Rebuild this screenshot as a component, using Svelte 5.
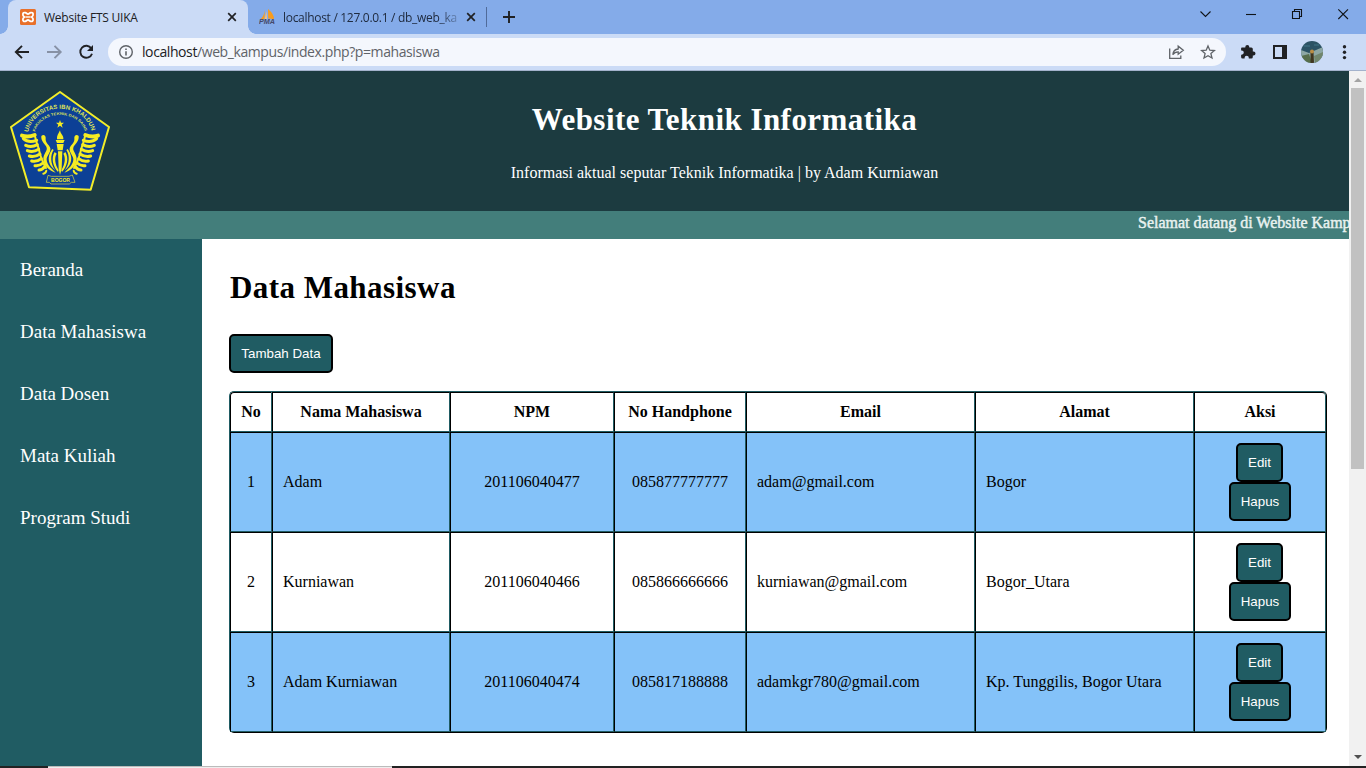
<script>
  const menu = ['Beranda', 'Data Mahasiswa', 'Data Dosen', 'Mata Kuliah', 'Program Studi'];
  const heads = ['No', 'Nama Mahasiswa', 'NPM', 'No Handphone', 'Email', 'Alamat', 'Aksi'];
  const rows = [
    ['1', 'Adam', '201106040477', '085877777777', 'adam@gmail.com', 'Bogor'],
    ['2', 'Kurniawan', '201106040466', '085866666666', 'kurniawan@gmail.com', 'Bogor_Utara'],
    ['3', 'Adam Kurniawan', '201106040474', '085817188888', 'adamkgr780@gmail.com', 'Kp. Tunggilis, Bogor Utara']
  ];
  const centered = [0, 2, 3];
</script>

{#snippet wing()}
  <g fill="none" stroke="#f5ec22" stroke-linecap="round">
    <path stroke-width="12" d="M66 167Q84 173 104 165" />
    <path stroke-width="9" d="M70 176Q86 190 110 181M77 196Q94 204 112 194M82 212Q99 219 116 208M88 228Q104 233 120 222M95 243Q110 247 124 236M105 257Q118 259 129 249M117 270Q127 270 134 260" />
    <path stroke-width="6" d="M130 281Q137 280 139 272M104 165Q109 188 116 205Q121 234 138 264" />
  </g>
  <path d="M124 168C130 161 138 166 137 174C135 190 148 193 151 205C153 218 139 229 140 239C141 256 156 266 167 278C146 272 130 255 130 237C130 221 143 212 140 203C137 192 122 186 124 168Z" />
  <path d="M157 207C144 224 141 246 158 264L166 271C150 250 151 225 161 210Z" />
  <path d="M164 216C153 234 158 258 174 276L176 271C164 250 163 233 170 221Z" />
{/snippet}

<div class="window">
  <div class="tabs">
    <div class="tab active">
      <svg class="fav" viewBox="0 0 16 16"><rect width="16" height="16" rx="1.5" fill="#e8702a" /><path d="M5.2 3.6C2.4 3 2.1 6.5 4.4 8C2.1 9.5 2.4 13 5.2 12.4C6.6 12.1 7 11 8 11S9.4 12.1 10.8 12.4C13.6 13 13.9 9.5 11.6 8C13.9 6.5 13.6 3 10.8 3.6C9.4 3.9 9 5 8 5S6.6 3.9 5.2 3.6Z" fill="none" stroke="#fff" stroke-width="1.8" /><path d="M5.6 8H10.4" stroke="#fff" stroke-width="1.4" /></svg>
      <span class="t1">Website FTS UIKA</span>
      <svg class="x" viewBox="0 0 10 10"><path d="M1.2 1.2L8.8 8.8M8.8 1.2L1.2 8.8" stroke="#202124" stroke-width="1.7" /></svg>
    </div>
    <div class="tab second">
      <svg class="fav" viewBox="0 0 16 16"><path d="M6 1L5.4 10L1 11Q5 7 6 1ZM9 0Q15 5 15 10L9.2 9.5Z" fill="#f89c1c" /><path d="M7.5 2L8 10L5.8 10Z" fill="#f9c27a" /><text x="0" y="15.3" textLength="16" lengthAdjust="spacingAndGlyphs" font-size="6.5" font-style="italic" font-weight="bold" font-family="Liberation Sans, sans-serif" fill="#45496a">PMA</text></svg>
      <span class="t2">localhost / 127.0.0.1 / db_web_ka</span>
      <svg class="x" viewBox="0 0 10 10"><path d="M1.2 1.2L8.8 8.8M8.8 1.2L1.2 8.8" stroke="#202124" stroke-width="1.7" /></svg>
    </div>
    <i class="sep"></i>
    <svg class="plus" viewBox="0 0 12 12"><path d="M6 0V12M0 6H12" stroke="#202124" stroke-width="1.9" /></svg>
    <svg class="controls" viewBox="0 0 160 20" fill="none" stroke="#101418" stroke-width="1.1"><path d="M6.5 7.5L11.5 12.5L16.5 7.5" /><path d="M52 10.5H62" /><path d="M98.5 7.5H105.5V14.5H98.5ZM100.5 7.5V5.5H107.5V12.5H105.5" /><path d="M144.3 5.3L154 15M154 5.3L144.3 15" /></svg>
  </div>

  <div class="toolbar">
    <svg class="nav" viewBox="0 0 108 36" fill="none" stroke-width="1.9">
      <path d="M29 18H16.5M22 11.8L15.8 18L22 24.2" stroke="#202124" />
      <path d="M47 18H60M54.5 11.8L60.7 18L54.5 24.2" stroke="#8791a5" />
      <path d="M91.3 14.4A6 6 0 1 0 92 19.7" stroke="#202124" /><path d="M93 11V17H87Z" fill="#202124" />
    </svg>
    <div class="address">
      <svg class="info" viewBox="0 0 16 16"><circle cx="8" cy="8" r="6.3" fill="none" stroke="#5f6368" stroke-width="1.4" /><path d="M8 7.2V11.4M8 4.4V6" stroke="#5f6368" stroke-width="1.6" /></svg>
      <span class="url"><b>localhost</b>/web_kampus/index.php?p=mahasiswa</span>
      <svg class="actions" viewBox="0 0 50 20" fill="none" stroke="#5f6368" stroke-width="1.3"><path d="M1.7 6.5V16.4H12.8V13.6" /><path d="M4.8 12.7C5.2 8.8 7.5 7.2 10.2 7V4.2L15.3 8.3L10.2 12.2V9.8C8 9.8 6.2 10.5 4.8 12.7Z" /><path d="M40 4L41.8 8.2L46.4 8.6L42.9 11.6L44 16L40 13.7L36 16L37.1 11.6L33.6 8.6L38.2 8.2Z" /></svg>
    </div>
    <svg class="ext" viewBox="0 0 140 36">
      <path d="M15.6 14H19V13.5A2 2 0 0 1 23 13.5V14H25A1.5 1.5 0 0 1 26.5 15.5V18H27.2A2 2 0 0 1 27.2 22H26.5V23.5A1.5 1.5 0 0 1 25 25H22.5V24.3A2 2 0 0 0 18.3 24.3V25H16.3A1.5 1.5 0 0 1 14.8 23.5V21.2H15.4A2 2 0 0 0 15.4 17H14.8V15A1 1 0 0 1 15.6 14Z" fill="#202124" transform="translate(0.3 -0.5)" />
      <path d="M47 11H61V25H47ZM49 13V23H56V13Z" fill="#202124" fill-rule="evenodd" />
      <clipPath id="av"><circle cx="86" cy="18" r="11" /></clipPath>
      <g clip-path="url(#av)"><path d="M75 7H97V29H75Z" fill="#2c5364" /><path d="M75 16L83 19L97 13V29H75Z" fill="#8da7a4" /><path d="M75 22L83 20L86 29H75Z" fill="#576e4b" /><path d="M88 22L97 18V29H89Z" fill="#71866d" /><path d="M84.5 18H87.5L88 29H84.5Z" fill="#40361f" /><circle cx="86" cy="17.5" r="2" fill="#b98d45" /><path d="M78 12H84M88 11H93" stroke="#417786" /></g>
      <g fill="#202124"><circle cx="118.5" cy="12.8" r="1.7" /><circle cx="118.5" cy="18.2" r="1.7" /><circle cx="118.5" cy="23.6" r="1.7" /></g>
    </svg>
  </div>

  <div class="viewport">
    <div class="page">
      <header>
        <svg class="logo" viewBox="30 33 300 300">
          <path d="M180 36L327 141L272 329L87 322L33 141Z" fill="#0c4096" stroke="#f3ed28" stroke-width="6" stroke-linejoin="round" />
          <path id="arc1" d="M84 157C105 63 255 63 276 157" fill="none" />
          <path id="arc2" d="M105 155C124 88 236 88 255 155" fill="none" />
          <g fill="#dfe357" font-family="Liberation Sans, sans-serif" font-weight="bold">
            <text font-size="18"><textPath href="#arc1" textLength="254" lengthAdjust="spacingAndGlyphs">UNIVERSITAS IBN KHALDUN</textPath></text>
            <text font-size="11"><textPath href="#arc2" textLength="193" lengthAdjust="spacingAndGlyphs">FAKULTAS TEKNIK DAN SAINS</textPath></text>
          </g>
          <g fill="#f5ec22">
            <path d="M180 120L183 128L192 128L185 134L188 143L180 137L172 143L175 134L168 128L177 128Z" />
            {@render wing()}
            <g transform="translate(360 0) scale(-1 1)">{@render wing()}</g>
            <path d="M180 151C175 162 170 167 171 178H190C192 166 181 163 180 151ZM167 180H194L190 189H171ZM170 192H191L188 211H173ZM174 214H187L185 266L180 285L176 266Z" />
          </g>
          <path d="M144 286L154 289H207L217 285L225 307H214L208 312H153L148 307H139Z" fill="#0c4096" stroke="#e8df35" stroke-width="2" />
          <text x="153" y="307" font-size="18" textLength="57" lengthAdjust="spacingAndGlyphs" font-family="Liberation Sans, sans-serif" font-weight="bold" fill="#f5ec22">BOGOR</text>
        </svg>
        <div class="heading">
          <h1>Website Teknik Informatika</h1>
          <p>Informasi aktual seputar Teknik Informatika | by Adam Kurniawan</p>
        </div>
      </header>
      <div class="marquee"><span>Selamat datang di Website Kampus</span></div>
      <div class="body">
        <nav>{#each menu as item}<a href="#menu">{item}</a>{/each}</nav>
        <main>
          <h2>Data Mahasiswa</h2>
          <button class="add">Tambah Data</button>
          <div class="table">
            {#each heads as h}<div class="cell head">{h}</div>{/each}
            {#each rows as row, r}
              {#each row as value, c}
                <div class="cell" class:blue={r % 2 === 0} class:mid={centered.includes(c)}>{value}</div>
              {/each}
              <div class="cell act" class:blue={r % 2 === 0}><button class="edit">Edit</button><button class="del">Hapus</button></div>
            {/each}
          </div>
        </main>
      </div>
    </div>
    <div class="scroll">
      <i class="up"></i>
      <div class="thumb"></div>
      <i class="down"></i>
    </div>
  </div>
  <div class="edge"><i></i></div>
</div>

<style>
  :global(body) { overflow: hidden; }
  .window { width: 1366px; height: 768px; display: flex; flex-direction: column; overflow: hidden; background: #fff; font-family: 'Liberation Serif', serif; box-sizing: border-box; }
  .window * { box-sizing: border-box; }
  svg { display: block; flex: none; }

  .tabs { height: 34px; flex: none; display: flex; align-items: center; background: #84abe9; font: 12px 'Open Sans', sans-serif; color: #202c40; }
  .tab { height: 34px; display: flex; align-items: center; white-space: nowrap; }
  .active { width: 240px; margin-left: 8px; padding: 0 11px 0 12px; background: #cbdbf6; border-radius: 8px 8px 0 0; position: relative; color: #202124; }
  .active::before, .active::after { content: ''; position: absolute; bottom: 0; width: 8px; height: 8px; }
  .active::before { left: -8px; background: radial-gradient(circle at 0 0, transparent 7.5px, #cbdbf6 8px); }
  .active::after { right: -8px; background: radial-gradient(circle at 100% 0, transparent 7.5px, #cbdbf6 8px); }
  .fav { width: 16px; height: 16px; margin-right: 8px; }
  .x { width: 10px; height: 10px; }
  .t1 { flex: 1; letter-spacing: -0.25px; }
  .second { width: 238px; padding: 0 10px 0 11px; }
  .t2 { width: 175px; margin-right: 8px; overflow: hidden; letter-spacing: -0.3px; mask-image: linear-gradient(90deg, #000 155px, transparent 182px); }
  .sep { width: 1px; height: 20px; background: #506b9a; }
  .plus { width: 12px; height: 12px; margin-left: 16px; }
  .controls { width: 160px; height: 20px; margin: -6px 12px 0 auto; }

  .toolbar { height: 37px; flex: none; display: flex; align-items: center; background: #cbdbf6; border-bottom: 1px solid #a3b2cc; }
  .nav { width: 108px; height: 36px; }
  .address { width: 1118px; height: 28px; border-radius: 14px; background: #f4f7fd; display: flex; align-items: center; padding: 0 8px 0 10px; }
  .info { width: 16px; height: 16px; margin-right: 8px; }
  .url { flex: 1; padding-bottom: 1px; font: 14px 'Open Sans', sans-serif; letter-spacing: -0.41px; color: #5f6368; }
  .url b { font-weight: 400; color: #202124; }
  .actions { width: 50px; height: 20px; }
  .ext { width: 140px; height: 36px; }

  .viewport { height: 695px; flex: none; display: flex; }
  .page { width: 1349px; overflow: hidden; display: flex; flex-direction: column; }
  header { height: 140px; flex: none; background: #1c3b40; color: #fff; display: flex; align-items: center; padding: 0 10px; }
  .logo { width: 100px; height: 100px; }
  .heading { flex: 1; text-align: center; padding-top: 2px; }
  h1 { font-size: 31px; letter-spacing: 0.45px; line-height: 35px; margin: 0 0 27px; }
  p { font-size: 16px; line-height: 18px; margin: 0; }
  .marquee { height: 28px; flex: none; background: #437e7b; color: #e9f2f0; font-size: 16px; line-height: 24px; white-space: nowrap; padding-left: 1138px; -webkit-text-stroke: 0.45px #e9f2f0; }
  .body { flex: 1; display: flex; }
  nav { width: 202px; background: #205c63; padding: 20px; display: flex; flex-direction: column; gap: 40px; }
  nav a { color: #fff; text-decoration: none; font-size: 19px; line-height: 22px; }
  main { padding: 30px 22px 0 27px; flex: 1; }
  h2 { font-size: 31px; letter-spacing: 0.45px; line-height: 37px; margin: 0 0 28px 1px; }
  button { display: block; height: 39px; padding: 0; background: #205c63; border: 2px solid #000; border-radius: 5px; color: #fff; font: 13.333px 'Liberation Sans', sans-serif; }
  .add { width: 104px; margin-bottom: 18px; }
  .table { width: 1098px; display: grid; grid-template-columns: 42px 178px 164px 132px 229px 219px 132px; grid-template-rows: 40px repeat(3, 100px); border: 1px solid #205c63; border-right-color: #000; border-bottom-color: #000; border-radius: 5px; }
  .cell { border: 1px solid #205c63; border-left-color: #000; border-top-color: #000; padding: 0 10px; display: flex; align-items: center; font-size: 16px; white-space: nowrap; }
  .cell:first-child { border-top-left-radius: 4px; }
  .cell:nth-child(7) { border-top-right-radius: 4px; }
  .head { justify-content: center; font-weight: bold; }
  .mid { justify-content: center; }
  .blue { background: #84c2f9; }
  .act { flex-direction: column; justify-content: center; }
  .edit { width: 47px; margin-right: 1px; }
  .del { width: 62px; }

  .scroll { width: 17px; background: #f1f1f1; display: flex; flex-direction: column; align-items: center; }
  .up, .down { border: 4px solid transparent; }
  .up { border-top: 0; border-bottom-color: #a3a3a3; margin: 7px 0 6px; }
  .thumb { width: 13px; height: 381px; background: #c1c1c1; }
  .down { border-bottom: 0; border-top-color: #505050; margin: auto 0 7px; }
  .edge { height: 2px; flex: none; background: #222; padding-left: 48px; }
  .edge i { display: block; width: 344px; height: 2px; background: #eee; border-top: 1px solid #bbb; }
</style>
